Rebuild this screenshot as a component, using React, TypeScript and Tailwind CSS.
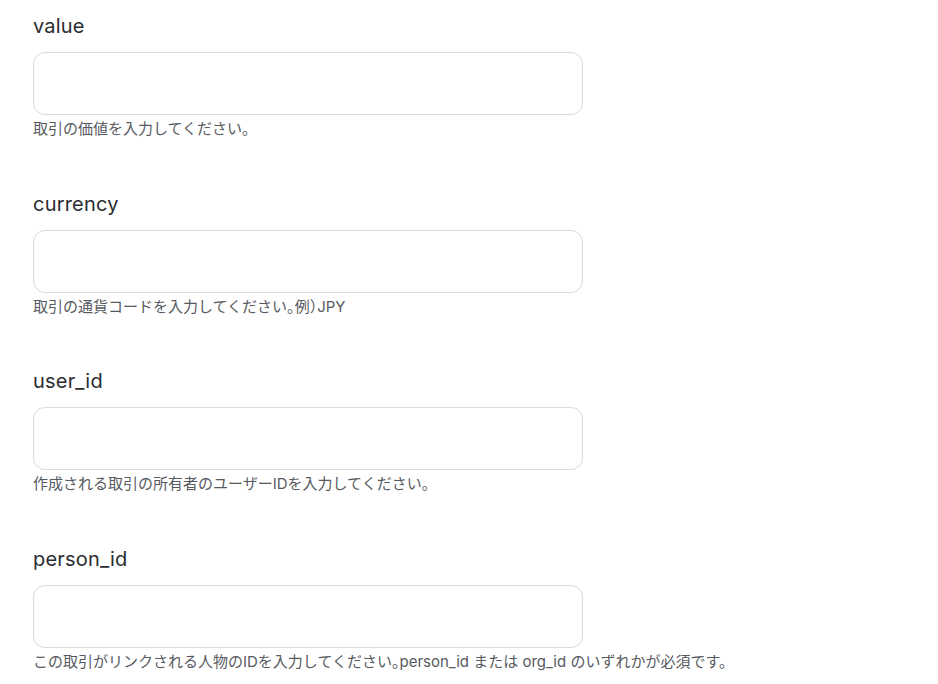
const fields = [
  { name: 'value', help: '取引の価値を入力してください。' },
  { name: 'currency', help: '取引の通貨コードを入力してください。例）JPY' },
  { name: 'user_id', help: '作成される取引の所有者のユーザーIDを入力してください。' },
  {
    name: 'person_id',
    help: 'この取引がリンクされる人物のIDを入力してください。person_id または org_id のいずれかが必須です。',
  },
];

// 文中の句読点・括弧は半角幅に詰める
const renderHelp = (text: string) =>
  text.split(/([。）])/).map((part, i, arr) =>
    (part === '。' || part === '）') && arr[i + 1] ? (
      <span key={i} className="[font-feature-settings:'halt']">
        {part}
      </span>
    ) : (
      part
    ),
  );

export default function App() {
  return (
    <div
      className="min-h-screen bg-white px-[33px] pt-[12px]"
      style={{ fontFamily: 'Inter, "Noto Sans CJK JP", sans-serif' }}
    >
      {fields.map((f) => (
        <div key={f.name} className="mb-[49.67px] flex flex-col">
          <label className="h-7 text-[20px] leading-7 font-normal tracking-[0.01em] text-[#2b2d31]">
            {f.name}
          </label>
          <input
            type="text"
            className="mt-[12px] h-[63px] w-[550px] rounded-xl border border-[#d6dae1] bg-white px-4 outline-none"
          />
          <p className="mt-1 h-[21px] text-[15px] leading-5 text-[#575a60]">{renderHelp(f.help)}</p>
        </div>
      ))}
    </div>
  );
}
